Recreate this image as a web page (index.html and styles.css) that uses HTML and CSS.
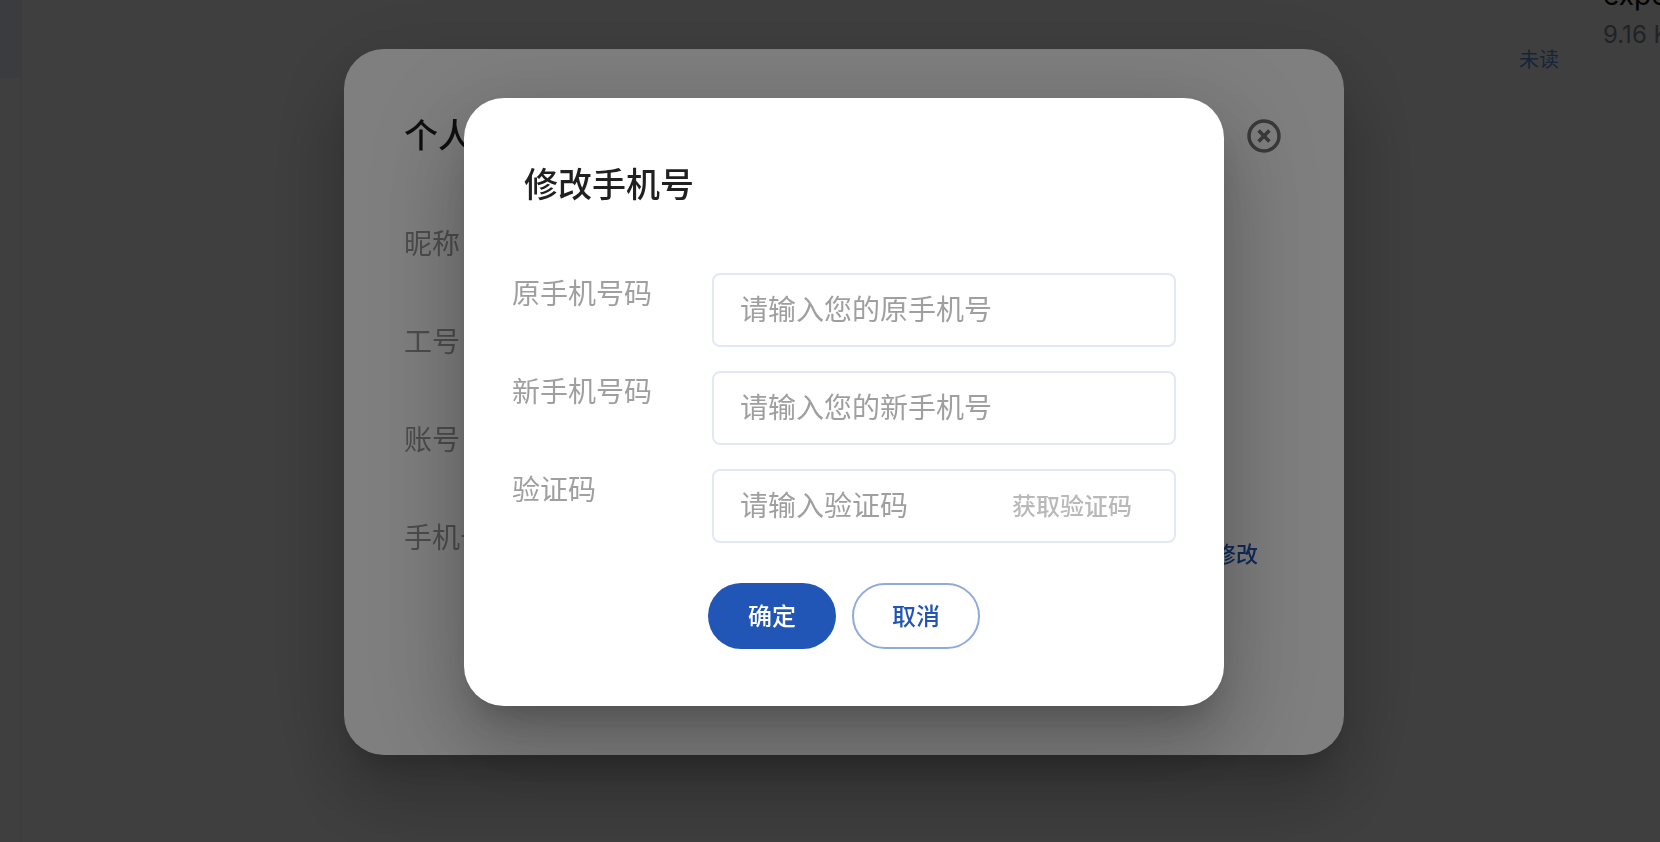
FILE: index.html
```html
<!DOCTYPE html>
<html lang="zh-CN">
<head>
    <meta charset="UTF-8">
    <meta name="viewport" content="width=device-width, initial-scale=1.0">
    <title>修改手机号</title>
    <link rel="stylesheet" href="styles.css">
</head>
<body>
    <!-- 聊天页面 -->
    <div class="page">
        <aside class="sidebar">
            <div class="sidebar-item"></div>
        </aside>
        <main class="chat">
            <div class="message">
                <span class="unread">未读</span>
                <div class="file">
                    <p class="file-name">export</p>
                    <p class="file-size">9.16 KB</p>
                </div>
            </div>
        </main>
    </div>

    <!-- 个人信息 -->
    <div class="overlay">
        <section class="dialog profile">
            <header class="profile-header">
                <h2 class="title">个人信息</h2>
                <button type="button" class="close" aria-label="关闭">
                    <svg viewBox="0 0 34 34" width="34" height="34" fill="none" stroke="currentColor">
                        <circle cx="17" cy="17" r="15" stroke-width="3.5"/>
                        <path d="M11.6 11.6l10.8 10.8M22.4 11.6l-10.8 10.8" stroke-width="3.6"/>
                    </svg>
                </button>
            </header>
            <div class="profile-row">昵称</div>
            <div class="profile-row">工号</div>
            <div class="profile-row">账号</div>
            <div class="profile-row">
                手机号
                <button type="button" class="edit">修改</button>
            </div>
        </section>
    </div>

    <!-- 修改手机号 -->
    <div class="overlay">
        <form class="dialog phone">
            <h2 class="title">修改手机号</h2>
            <div class="fields">
                <div class="field">
                    <label for="oldPhone">原手机号码</label>
                    <div class="input-box">
                        <input type="tel" id="oldPhone" placeholder="请输入您的原手机号">
                    </div>
                </div>
                <div class="field">
                    <label for="newPhone">新手机号码</label>
                    <div class="input-box">
                        <input type="tel" id="newPhone" placeholder="请输入您的新手机号">
                    </div>
                </div>
                <div class="field">
                    <label for="code">验证码</label>
                    <div class="input-box">
                        <input type="text" id="code" placeholder="请输入验证码">
                        <button type="button" class="get-code" disabled>获取验证码</button>
                    </div>
                </div>
            </div>
            <div class="actions">
                <button type="submit" class="btn btn-primary">确定</button>
                <button type="button" class="btn btn-outline">取消</button>
            </div>
        </form>
    </div>
</body>
</html>
```
FILE: styles.css
```css
* {
    box-sizing: border-box;
}

body {
    margin: 0;
    height: 100vh;
    overflow: hidden;
    font-family: Inter, "Noto Sans CJK SC", sans-serif;
    color: #202020;
    background: #fff;
}

h2, p {
    margin: 0;
}

button, input {
    font-family: inherit;
    padding: 0;
    border: 0;
    background: none;
}

button {
    padding-bottom: 4px;
}

/* 页面背景 */
.page {
    display: flex;
    height: 100vh;
}

.sidebar {
    flex: none;
    width: 22px;
    border-right: 2px solid #f2f2f2;
}

.sidebar-item {
    height: 78px;
    background: #ecf2fe;
}

.chat {
    flex: 1;
    overflow: hidden;
}

.message {
    display: flex;
    justify-content: flex-end;
    gap: 44px;
    height: 72px;
}

.unread {
    align-self: flex-end;
    font-size: 20px;
    line-height: 24px;
    color: #5c92dc;
}

.file {
    display: flex;
    flex-direction: column;
    justify-content: flex-end;
    width: 57px;
    padding-bottom: 20px;
    white-space: nowrap;
}

.file-name {
    margin-bottom: 6px;
    font-size: 28px;
    line-height: 34px;
    color: #000;
}

.file-size {
    font-size: 24px;
    line-height: 34px;
    color: #868a9c;
}

/* 弹窗 */
.overlay {
    position: fixed;
    inset: 0;
    display: flex;
    align-items: center;
    justify-content: center;
    padding: 0 0 38px 28px;
    background: rgba(0, 0, 0, 0.5);
}

.dialog {
    border-radius: 40px;
    background: #fff;
    box-shadow: 0 22px 30px -14px rgba(0, 0, 0, 0.2),
                0 48px 76px 6px rgba(0, 0, 0, 0.14),
                0 18px 92px 16px rgba(0, 0, 0, 0.12);
}

.title {
    font-size: 34px;
    line-height: 50px;
    font-weight: 500;
}

.profile {
    width: 1000px;
    padding: 62px 60px 164px;
}

.profile-header {
    display: flex;
    align-items: center;
    justify-content: space-between;
    margin-bottom: 62px;
}

.close {
    display: flex;
    margin-right: 3px;
    padding: 0;
    color: #747474;
}

.profile-row {
    display: flex;
    justify-content: space-between;
    height: 74px;
    font-size: 28px;
    line-height: 42px;
    color: #9b9b9b;
}

.profile-row + .profile-row {
    margin-top: 24px;
}

.edit {
    margin-right: 26px;
    font-size: 22px;
    font-weight: 500;
    color: #2156b7;
}

.phone {
    width: 760px;
    padding: 62px 48px 57px;
}

.phone .title {
    padding-left: 12px;
}

.fields {
    display: grid;
    gap: 24px;
    margin-top: 63px;
}

.field {
    display: grid;
    grid-template-columns: 200px minmax(0, 1fr);
}

.field label {
    font-size: 28px;
    line-height: 42px;
    color: #9f9f9f;
}

.input-box {
    display: flex;
    align-items: center;
    height: 74px;
    padding: 0 42px 0 26px;
    border: 2px solid #e2e8f5;
    border-radius: 8px;
}

.input-box input {
    flex: 1;
    min-width: 0;
    height: 100%;
    font-size: 28px;
    color: #202020;
    outline: none;
}

.input-box input::placeholder {
    color: #9f9f9f;
}

.get-code {
    font-size: 24px;
    font-weight: 500;
    color: #b9b9b9;
}

.actions {
    display: flex;
    justify-content: center;
    gap: 16px;
    margin-top: 40px;
}

.btn {
    width: 128px;
    height: 66px;
    border-radius: 33px;
    font-size: 24px;
    font-weight: 500;
}

.btn-primary {
    color: #fff;
    background: #2156b7;
}

.btn-outline {
    border: 2px solid #90abdb;
    color: #2156b7;
}
```
